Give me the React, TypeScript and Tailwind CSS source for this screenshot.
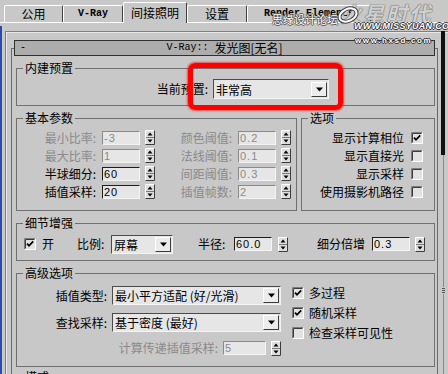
import React from "react";

const cjk = "font-['Noto_Sans_CJK_SC','Noto_Sans',sans-serif]";
const mono = "font-['Liberation_Mono','DejaVu_Sans_Mono',monospace]";
const num = "font-['Liberation_Sans','Arial',sans-serif]";

function Spinner({ className = "" }: { className?: string }) {
  return (
    <svg width="10" height="15" viewBox="0 0 10 15" className={`shrink-0 ${className}`}>
      <rect x="0" y="0" width="10" height="15" fill="#dedede" />
      <path d="M0.5 14.5V0.5H9.5" stroke="#ffffff" fill="none" />
      <path d="M0.5 14.5H9.5V0.5" stroke="#3c3c3c" fill="none" />
      <path d="M1 7.5H9" stroke="#7a7a7a" />
      <path d="M5 2.5L7.5 5.5H2.5Z" fill="#000" />
      <path d="M2.5 9.5H7.5L5 12.5Z" fill="#000" />
    </svg>
  );
}

function Check({ on, className = "" }: { on?: boolean; className?: string }) {
  return (
    <svg width="12" height="12" viewBox="0 0 12 12" className={`shrink-0 ${className}`}>
      <rect width="12" height="12" fill="#e2e2e2" />
      <path d="M0.5 11.5V0.5H11.5" stroke="#7c7c7c" fill="none" />
      <path d="M1.5 10.5V1.5H10.5" stroke="#3a3a3a" fill="none" />
      <path d="M0.5 11.5H11.5V0.5" stroke="#ffffff" fill="none" />
      {on && <path d="M3 5.6L5 7.8L9.2 3.4" stroke="#000" strokeWidth="1.8" fill="none" />}
    </svg>
  );
}

function DropBtn() {
  return (
    <div className="shrink-0 w-[16px] h-[15px] mr-[1px] flex items-center justify-center bg-[#ececec] border border-t-white border-l-white border-b-[#3c3c3c] border-r-[#3c3c3c]">
      <svg width="7" height="5" viewBox="0 0 7 5">
        <path d="M0 0.5H7L3.5 4.5Z" fill="#000" />
      </svg>
    </div>
  );
}

function Select({ value, className = "" }: { value: string; className?: string }) {
  return (
    <div className={`shrink-0 flex items-center bg-[#e6e6e6] border border-t-[#4a4a4a] border-l-[#4a4a4a] border-b-[#f4f4f4] border-r-[#f4f4f4] ${className}`}>
      <span className="flex-1 min-w-0 pl-[2px] text-[12px] leading-[15px] whitespace-nowrap">{value}</span>
      <DropBtn />
    </div>
  );
}

function Field({ value, off, className = "" }: { value: string; off?: boolean; className?: string }) {
  return (
    <div
      className={`shrink-0 h-[14px] flex items-center bg-[#e6e6e6] border border-b-[#f4f4f4] border-r-[#f4f4f4] ${
        off ? "border-t-[#8a8a8a] border-l-[#8a8a8a] text-[#8a8a8a]" : "border-t-[#1e1e1e] border-l-[#1e1e1e] text-black"
      } ${num} text-[11px] leading-[12px] tracking-[1px] pl-[1px] ${className}`}
    >
      {value}
    </div>
  );
}

function Group({ title, className = "", children }: { title: string; className?: string; children?: React.ReactNode }) {
  return (
    <fieldset className={`border border-[#707070] min-w-0 ${className}`}>
      <legend className="ml-[6px] px-[2px] text-[12px] leading-[12px]">{title}</legend>
      {children}
    </fieldset>
  );
}

function Tab({ w, active, children }: { w: string; active?: boolean; children: React.ReactNode }) {
  return (
    <div
      className={`${w} flex items-center justify-center rounded-t-[2px] border-t border-l border-white border-r border-r-[#404040] bg-[#c8c8c8] ${
        active ? "h-[21px] -mb-px" : "h-[17px]"
      }`}
    >
      {children}
    </div>
  );
}

function ParamRow({ l1, v1, off1, l2, v2 }: { l1: string; v1: string; off1?: boolean; l2: string; v2: string }) {
  return (
    <div className="flex items-center h-[15px]">
      <span className={`w-[79px] text-right text-[12px] leading-[12px] whitespace-nowrap ${off1 ? "text-[#8a8a8a]" : ""}`}>{l1}</span>
      <Field value={v1} off={off1} className="ml-[6px] w-[38px]" />
      <Spinner className="ml-[5px]" />
      <span className="w-[77px] text-right text-[12px] leading-[12px] whitespace-nowrap text-[#8a8a8a]">{l2}</span>
      <Field value={v2} off className="ml-[6px] w-[38px]" />
      <Spinner className="ml-[5px]" />
    </div>
  );
}

function OptRow({ label, on }: { label: string; on?: boolean }) {
  return (
    <div className="flex items-center justify-end h-[15px]">
      <span className="text-[12px] leading-[12px] whitespace-nowrap">{label}</span>
      <Check on={on} className="ml-[7px]" />
    </div>
  );
}

function CheckRow({ label, on }: { label: string; on?: boolean }) {
  return (
    <div className="flex items-center h-[12px]">
      <Check on={on} />
      <span className="ml-[5px] text-[12px] leading-[12px] whitespace-nowrap">{label}</span>
    </div>
  );
}

export default function App() {
  return (
    <div className={`relative w-[448px] h-[374px] overflow-hidden bg-[#c8c8c8] text-black ${cjk}`}>
      {/* tabs */}
      <div className="flex items-end h-[23px] pl-[4px] border-b border-white">
        <Tab w="w-[59px]">
          <span className="text-[12px] leading-[12px]">公用</span>
        </Tab>
        <Tab w="w-[60px]">
          <span className={`${mono} font-bold text-[10px] leading-[12px]`}>V-Ray</span>
        </Tab>
        <Tab w="w-[64px]" active>
          <span className="text-[12px] leading-[12px]">间接照明</span>
        </Tab>
        <Tab w="w-[60px]">
          <span className="text-[12px] leading-[12px]">设置</span>
        </Tab>
        <Tab w="w-[124px]">
          <span className={`${mono} font-bold text-[10px] leading-[12px] whitespace-nowrap`}>Render Elements</span>
        </Tab>
      </div>

      {/* body */}
      <div className="flex h-[351px]">
        <div className="w-[2px] mt-[3px] bg-[#2c4aa6]" />
        <div className="w-[3px]" />
        <div className="flex-1 flex mt-[8px] border-l border-t border-[#808080] shadow-[inset_1px_1px_0_#e8e8e8]">
          <div className="pl-[5px]">
            <div className="mt-[16px] w-[427px] border-t border-x border-[#6a6a6a] flex flex-col pl-[4px] pr-[2px]">
              {/* rollout title */}
              <div className="-mt-[9px] -ml-[2px] h-[16px] grid grid-cols-[1fr_auto_1fr] items-center bg-[#adadad] border border-[#303030]">
                <span className={`${mono} text-[10px] leading-[12px] pl-[5px]`}>-</span>
                <span className="flex items-center whitespace-nowrap">
                  <span className={`${mono} text-[10px] leading-[12px]`}>V-Ray::&nbsp;</span>
                  <span className="text-[12px] leading-[12px]">发光图[无名]</span>
                </span>
                <span />
              </div>

              {/* built-in presets */}
              <Group title="内建预置" className="mt-[6px] pt-[5px] pb-[6px]">
                <div className="flex items-center">
                  <span className="w-[191px] text-right text-[12px] leading-[12px] whitespace-nowrap">当前预置:</span>
                  <Select value="非常高" className="ml-[5px] w-[116px] h-[20px]" />
                </div>
              </Group>

              {/* basic params + options */}
              <div className="flex gap-[4px] mt-[6px]">
                <Group title="基本参数" className="w-[281px] pt-[6px] pb-[11px]">
                  <div className="flex flex-col gap-[3px]">
                    <ParamRow l1="最小比率:" v1="-3" off1 l2="颜色阈值:" v2="0.2" />
                    <ParamRow l1="最大比率:" v1="1" off1 l2="法线阈值:" v2="0.1" />
                    <ParamRow l1="半球细分:" v1="60" l2="间距阈值:" v2="0.3" />
                    <ParamRow l1="插值采样:" v1="20" l2="插值帧数:" v2="2" />
                  </div>
                </Group>
                <Group title="选项" className="flex-1 pt-[6px] pb-[11px] pr-[11px]">
                  <div className="flex flex-col gap-[3px]">
                    <OptRow label="显示计算相位" on />
                    <OptRow label="显示直接光" />
                    <OptRow label="显示采样" />
                    <OptRow label="使用摄影机路径" />
                  </div>
                </Group>
              </div>

              {/* detail enhancement */}
              <Group title="细节增强" className="mt-[6px] pt-[5px] pb-[6px]">
                <div className="flex items-center h-[20px] pl-[7px] text-[12px] leading-[12px] whitespace-nowrap">
                  <Check on />
                  <span className="ml-[6px] w-[12px]">开</span>
                  <span className="ml-[23px] w-[34px]">比例:</span>
                  <Select value="屏幕" className="w-[62px] h-[19px]" />
                  <span className="ml-[25px] w-[36px]">半径:</span>
                  <Field value="60.0" className="w-[38px]" />
                  <Spinner className="ml-[6px]" />
                  <span className="ml-[29px] w-[55px]">细分倍增</span>
                  <Field value="0.3" className="w-[38px]" />
                  <Spinner className="ml-[5px]" />
                </div>
              </Group>

              {/* advanced options */}
              <Group title="高级选项" className="mt-[6px] pt-[7px] pb-[10px]">
                <div className="flex">
                  <div className="w-[264px] flex flex-col items-end gap-[8px] text-[12px] leading-[12px] whitespace-nowrap">
                    <div className="flex items-center">
                      <span>插值类型:</span>
                      <Select value="最小平方适配 (好/光滑)" className="ml-[5px] w-[169px] h-[19px]" />
                    </div>
                    <div className="flex items-center">
                      <span>查找采样:</span>
                      <Select value="基于密度 (最好)" className="ml-[5px] w-[169px] h-[19px]" />
                    </div>
                    <div className="flex items-center h-[16px]">
                      <span className="text-[#8a8a8a]">计算传递插值采样:</span>
                      <Field value="5" off className="ml-[5px] w-[43px]" />
                      <Spinner className="ml-[5px]" />
                    </div>
                  </div>
                  <div className="ml-[11px] pt-[1px] flex flex-col gap-[8px]">
                    <CheckRow label="多过程" on />
                    <CheckRow label="随机采样" on />
                    <CheckRow label="检查采样可见性" />
                  </div>
                </div>
              </Group>

              <Group title="模式" className="mt-[4px] h-[40px]" />
            </div>
          </div>

          {/* scrollbar */}
          <div className="ml-[3px] -mt-px w-[4px] flex flex-col items-center">
            <div className="w-[4px] h-[124px] bg-[#101010]" />
            <div className="w-px h-[132px] bg-[#8a8a8a]" />
            <div className="flex flex-col gap-[1px] py-[1px]">
              <div className="w-[3px] h-px bg-[#555]" />
              <div className="w-[3px] h-px bg-[#555]" />
              <div className="w-[3px] h-px bg-[#555]" />
            </div>
            <div className="w-px flex-1 bg-[#8a8a8a]" />
          </div>
        </div>
      </div>

      {/* red highlight */}
      <div className="absolute left-[188px] top-[63px] w-[155px] h-[47px] border-[5px] border-[#ff0000] rounded-[7px] shadow-[0_0_2px_1px_rgba(255,0,0,0.6)] pointer-events-none" />

      {/* watermark */}
      <div className="absolute left-[340px] top-[1px] pointer-events-none">
        <span className="italic font-bold text-[21px] leading-[24px] tracking-[2px] text-[#f2f2f2]/80 [text-shadow:0_0_1px_#555,0_0_1px_#555]">火星时代</span>
      </div>
      <svg width="22" height="20" viewBox="0 0 22 20" className="absolute left-[337px] top-[5px] pointer-events-none">
        <ellipse cx="11" cy="10" rx="9" ry="6" transform="rotate(-25 11 10)" fill="none" stroke="#444" strokeWidth="4" />
        <ellipse cx="11" cy="10" rx="9" ry="6" transform="rotate(-25 11 10)" fill="none" stroke="#fff" strokeWidth="2" />
      </svg>
      <div className="absolute left-[272px] top-[5px] pointer-events-none">
        <span className="text-[11px] leading-[14px] text-white [text-shadow:1px_0_#555,-1px_0_#555,0_1px_#555,0_-1px_#555]">思缘设计论坛</span>
      </div>
      <div className="absolute left-[354px] top-[10px] pointer-events-none">
        <span className={`${num} italic font-bold text-[9px] leading-[10px] tracking-[0.3px] text-white [text-shadow:1px_0_#333,-1px_0_#333,0_1px_#333,0_-1px_#333]`}>WWW.MISSYUAN.COM</span>
      </div>
      <div className="absolute left-[355px] top-[24px] pointer-events-none">
        <span className={`${num} font-bold text-[8px] leading-[10px] tracking-[1.6px] text-white [text-shadow:1px_0_#333,-1px_0_#333,0_1px_#333,0_-1px_#333]`}>www.hxsd.com</span>
      </div>
    </div>
  );
}
